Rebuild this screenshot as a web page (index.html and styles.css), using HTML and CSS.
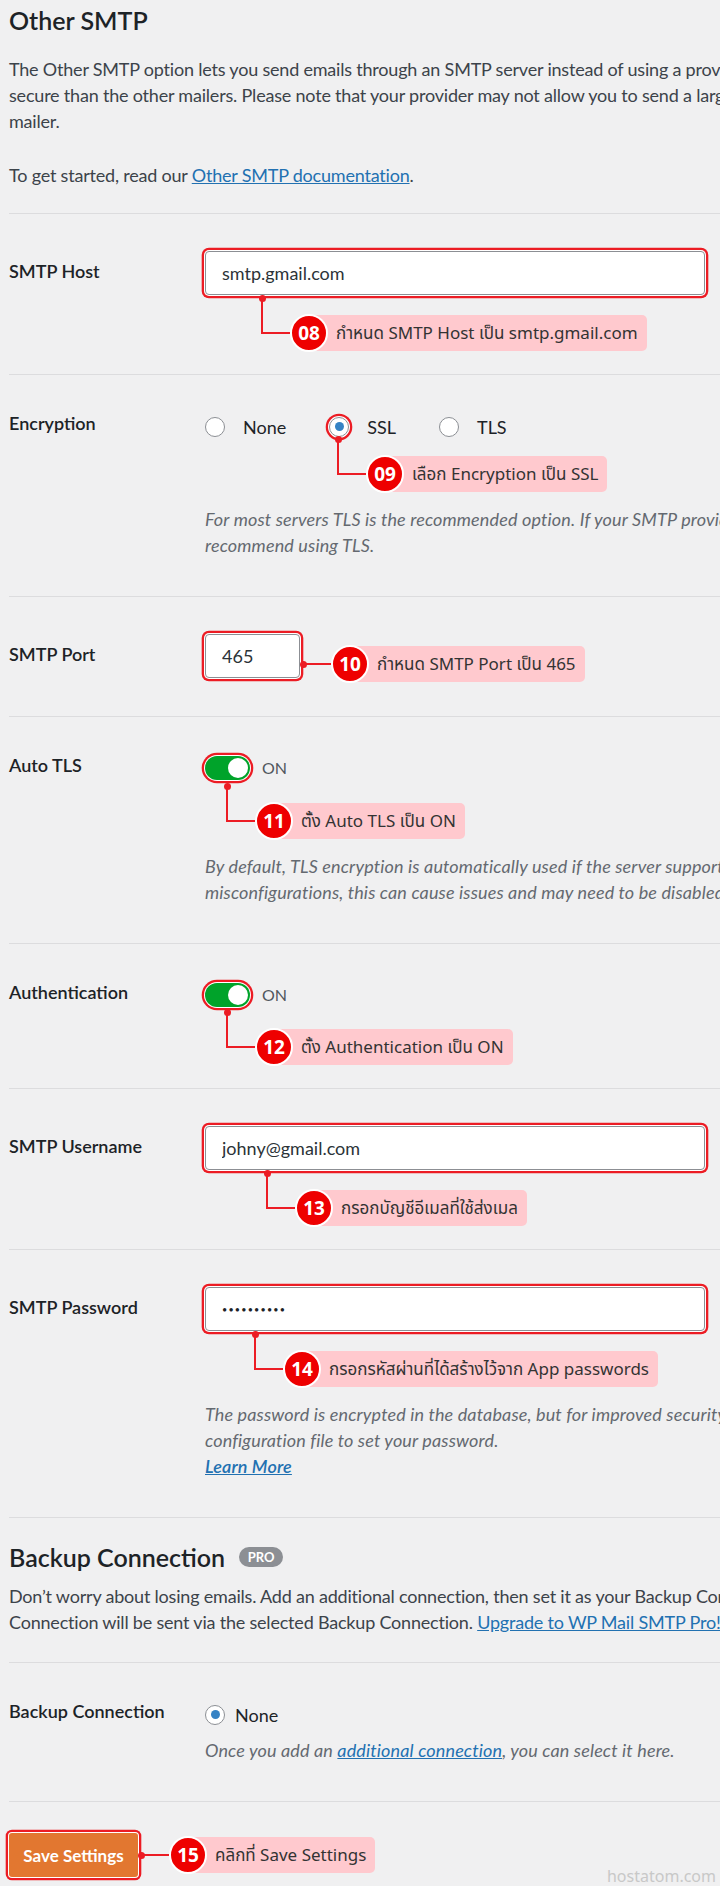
FILE: index.html
```html
<!DOCTYPE html>
<html lang="en">
<head>
<meta charset="utf-8">
<title>Other SMTP</title>
<link rel="stylesheet" href="styles.css">
</head>
<body>
<div class="page">
  <h2 class="title">Other SMTP</h2>
  <p class="intro">The Other SMTP option lets you send emails through an SMTP server instead of using a provider's API. This is usually less<br>secure than the other mailers. Please note that your provider may not allow you to send a large number of emails. In that case, please use a different<br>mailer.</p>
  <p class="intro intro-last">To get started, read our <a href="#">Other SMTP documentation</a>.</p>

  <div class="row">
    <label class="label label-input">SMTP Host</label>
    <div class="field">
      <input class="text-input wide hl" type="text" value="smtp.gmail.com">
      <div class="callout c-host"><span class="num">08</span><span class="tip">กำหนด SMTP Host เป็น smtp.gmail.com</span></div>
    </div>
  </div>

  <div class="row">
    <label class="label">Encryption</label>
    <div class="field">
      <div class="radios">
        <label class="opt"><input class="radio" type="radio" name="enc">None</label>
        <label class="opt"><input class="radio hl" type="radio" name="enc" checked>SSL</label>
        <label class="opt"><input class="radio" type="radio" name="enc">TLS</label>
      </div>
      <div class="callout c-enc"><span class="num">09</span><span class="tip">เลือก Encryption เป็น SSL</span></div>
      <p class="desc">For most servers TLS is the recommended option. If your SMTP provider offers both SSL and TLS options, we<br>recommend using TLS.</p>
    </div>
  </div>

  <div class="row">
    <label class="label label-input">SMTP Port</label>
    <div class="field field-inline">
      <input class="text-input port hl" type="text" value="465">
      <div class="callout callout-inline"><span class="num">10</span><span class="tip">กำหนด SMTP Port เป็น 465</span></div>
    </div>
  </div>

  <div class="row">
    <label class="label">Auto TLS</label>
    <div class="field">
      <div class="switch"><span class="toggle hl"></span><span class="switch-text">ON</span></div>
      <div class="callout c-tls"><span class="num">11</span><span class="tip">ตั้ง Auto TLS เป็น ON</span></div>
      <p class="desc">By default, TLS encryption is automatically used if the server supports it (recommended). In some cases, due to server<br>misconfigurations, this can cause issues and may need to be disabled.</p>
    </div>
  </div>

  <div class="row">
    <label class="label">Authentication</label>
    <div class="field">
      <div class="switch"><span class="toggle hl"></span><span class="switch-text">ON</span></div>
      <div class="callout c-auth"><span class="num">12</span><span class="tip">ตั้ง Authentication เป็น ON</span></div>
    </div>
  </div>

  <div class="row">
    <label class="label label-input">SMTP Username</label>
    <div class="field">
      <input class="text-input wide hl" type="text" value="johny@gmail.com">
      <div class="callout c-user"><span class="num">13</span><span class="tip">กรอกบัญชีอีเมลที่ใช้ส่งเมล</span></div>
    </div>
  </div>

  <div class="row">
    <label class="label label-input">SMTP Password</label>
    <div class="field">
      <input class="text-input wide hl password" type="password" value="abcdefghij">
      <div class="callout c-pass"><span class="num">14</span><span class="tip">กรอกรหัสผ่านที่ได้สร้างไว้จาก App passwords</span></div>
      <p class="desc">The password is encrypted in the database, but for improved security we recommend using your site's WordPress<br>configuration file to set your password.<br><a class="more" href="#">Learn More</a></p>
    </div>
  </div>

  <div class="section">
    <h2 class="title sec-title">Backup Connection <span class="pro">PRO</span></h2>
    <p class="sec-text">Don’t worry about losing emails. Add an additional connection, then set it as your Backup Connection. Emails that fail to send with the Primary<br>Connection will be sent via the selected Backup Connection. <a href="#">Upgrade to WP Mail SMTP Pro!</a></p>
  </div>

  <div class="row">
    <label class="label">Backup Connection</label>
    <div class="field">
      <div class="radios">
        <label class="opt opt-tight"><input class="radio" type="radio" name="backup" checked>None</label>
      </div>
      <p class="desc desc-tight">Once you add an <a href="#">additional connection</a>, you can select it here.</p>
    </div>
  </div>

  <div class="row row-save">
    <button class="btn hl" type="button">Save Settings</button>
    <div class="callout callout-inline c-save"><span class="num">15</span><span class="tip">คลิกที่ Save Settings</span></div>
    <span class="watermark">hostatom.com</span>
  </div>
</div>
</body>
</html>
```

FILE: styles.css
```css
:root {
  --red: #ec1c24;
  --line: #dcdcde;
}

html, body {
  margin: 0;
  padding: 0;
  background: #f0f0f1;
  overflow: hidden;
}

body {
  font-family: Lato, "Noto Sans", "Noto Sans Thai", sans-serif;
  font-size: 18px;
  line-height: 26px;
  color: #3c434a;
}

.page {
  width: 720px;
  padding-left: 9px;
  box-sizing: border-box;
  overflow: hidden;
}

a {
  color: #2271b1;
  text-decoration: underline;
}

.title {
  margin: 4px 0 0;
  font-size: 25px;
  line-height: 32px;
  font-weight: 600;
  color: #1d2327;
}

.intro {
  margin: 20px 0 0;
  white-space: nowrap;
  letter-spacing: -0.2px;
}

.intro-last {
  margin-top: 28px;
  margin-bottom: 25px;
}

.row {
  display: flex;
  border-top: 1px solid var(--line);
  padding: 37px 0 38px;
}

.label {
  flex: none;
  width: 196px;
  font-weight: 600;
  font-size: 18px;
  line-height: 22px;
  color: #1d2327;
}

.label-input {
  padding-top: 9px;
}

.field {
  flex: 1;
  min-width: 0;
}

.field-inline {
  display: flex;
  align-items: center;
}

.text-input {
  display: block;
  box-sizing: border-box;
  height: 44px;
  margin: 0;
  padding: 0 16px;
  border: 1px solid #8c8f94;
  border-radius: 4px;
  background: #fff;
  font-family: Lato, "Noto Sans", sans-serif;
  font-size: 18px;
  color: #2c3338;
  outline: none;
}

.wide {
  width: 500px;
}

.port {
  width: 95px;
}

.password {
  font-size: 9px;
  letter-spacing: 1.2px;
  color: #1d2327;
}

.hl {
  box-shadow: 0 0 0 1px #fff, 0 0 0 3.3px var(--red);
}

/* radios */
.radios {
  display: flex;
  align-items: center;
  gap: 43px;
  height: 29px;
}

.opt {
  display: flex;
  align-items: center;
  gap: 18px;
  color: #1d2327;
  font-size: 18px;
}

.opt-tight {
  gap: 10px;
}

.radio {
  appearance: none;
  -webkit-appearance: none;
  box-sizing: border-box;
  width: 20px;
  height: 20px;
  margin: 0;
  border: 1px solid #8c8f94;
  border-radius: 50%;
  background: #fff;
  flex: none;
}

.radio:checked::before {
  content: "";
  display: block;
  width: 9px;
  height: 9px;
  margin: 4.5px auto 0;
  border-radius: 50%;
  background: #3582c4;
}

/* toggles */
.switch {
  display: flex;
  align-items: center;
  gap: 12px;
  height: 28px;
}

.toggle {
  position: relative;
  display: block;
  width: 45px;
  height: 24px;
  border-radius: 12px;
  background: #00a32a;
}

.toggle::after {
  content: "";
  position: absolute;
  right: 2px;
  top: 2px;
  width: 20px;
  height: 20px;
  border-radius: 50%;
  background: #fff;
}

.switch-text {
  font-size: 16px;
  color: #50575e;
}

/* descriptions */
.desc {
  margin: 13px 0 0;
  font-style: italic;
  color: #646970;
  white-space: nowrap;
  letter-spacing: 0.14px;
}

.desc-tight {
  margin-top: 8px;
}

.more {
  font-weight: 600;
}

/* callouts */
.callout {
  position: relative;
  display: flex;
  align-items: center;
  width: max-content;
  height: 38px;
  margin-top: 19px;
  font-family: "Noto Sans", "Noto Sans Thai", "Noto Looped Thai", Loma, Garuda, sans-serif;
}

.field > .callout:last-child {
  margin-bottom: -16px;
}

.callout::before {
  content: "";
  position: absolute;
  right: 100%;
  bottom: 18px;
  width: 29px;
  height: 36px;
  box-sizing: border-box;
  border-left: 2px solid var(--red);
  border-bottom: 2px solid var(--red);
}

.callout::after {
  content: "";
  position: absolute;
  left: -31.5px;
  top: -19.5px;
  width: 7px;
  height: 7px;
  border-radius: 50%;
  background: var(--red);
}

.callout-inline {
  margin-top: 0;
  margin-left: 31px;
}

.callout-inline::before {
  height: 2px;
  width: 28px;
  border-left: none;
}

.callout-inline::after {
  left: -31.5px;
  top: 15.5px;
}

.num {
  position: relative;
  z-index: 1;
  flex: none;
  display: flex;
  align-items: center;
  justify-content: center;
  box-sizing: border-box;
  width: 38px;
  height: 38px;
  border: 2.5px solid #fff;
  border-radius: 50%;
  background: #ee0000;
  color: #fff;
  font-family: "Noto Sans", sans-serif;
  font-weight: 700;
  font-size: 19px;
  line-height: 1;
}

.tip {
  display: flex;
  align-items: center;
  height: 36px;
  margin-left: -19px;
  padding: 0 9px 0 27px;
  border-radius: 0 5px 5px 0;
  background: #ffc9ce;
  color: #333;
  font-size: 17px;
  white-space: nowrap;
}

.c-host { margin-left: 85px; }
.c-enc  { margin-left: 161px; margin-top: 14px; }
.c-tls  { margin-left: 50px; margin-top: 20px; }
.c-auth { margin-left: 50px; }
.c-user { margin-left: 90px; }
.c-pass { margin-left: 78px; }

/* backup section */
.section {
  border-top: 1px solid var(--line);
  padding-top: 23px;
}

.sec-title {
  margin: 0;
  display: flex;
  align-items: center;
  gap: 14px;
}

.pro {
  display: inline-flex;
  align-items: center;
  justify-content: center;
  width: 44px;
  height: 20px;
  border-radius: 10px;
  background: #8c8f94;
  color: #fff;
  font-size: 13px;
  font-weight: 700;
  line-height: 1;
}

.sec-text {
  margin: 10px 0 27px;
  white-space: nowrap;
  letter-spacing: -0.2px;
}

/* save row */
.row-save {
  position: relative;
  align-items: center;
  padding: 31px 0 10px;
}

.btn {
  flex: none;
  width: 129px;
  height: 44px;
  margin: 0;
  border: none;
  border-radius: 3px;
  background: #e27730;
  color: #fff;
  font-family: Lato, "Noto Sans", sans-serif;
  font-size: 17px;
  font-weight: 700;
}

.watermark {
  position: absolute;
  right: 4px;
  top: 66px;
  font-size: 16px;
  line-height: 16px;
  color: #c8c8c8;
  font-family: "Noto Sans", sans-serif;
}
```
